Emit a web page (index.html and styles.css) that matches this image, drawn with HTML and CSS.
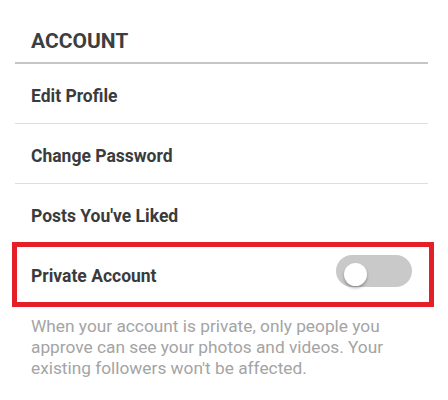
FILE: index.html
```html
<!DOCTYPE html>
<html>
<head>
<meta charset="utf-8">
<link rel="stylesheet" href="styles.css">
</head>
<body>
<div class="settings">
  <div class="section-header">ACCOUNT</div>
  <div class="row">Edit Profile</div>
  <div class="row">Change Password</div>
  <div class="row row-last">Posts You've Liked</div>
  <div class="row row-toggle highlighted">
    <span class="row-label">Private Account</span>
    <span class="toggle"><span class="knob"></span></span>
  </div>
  <p class="description">When your account is private, only people you approve can see your photos and videos. Your existing followers won't be affected.</p>
</div>
</body>
</html>
```
FILE: styles.css
```css
html, body {
  margin: 0;
  padding: 0;
  background: #ffffff;
}
body {
  width: 448px;
  height: 400px;
  overflow: hidden;
  font-family: Roboto, "Liberation Sans", sans-serif;
}
.settings {
  padding: 0 20px 0 15px;
}
.section-header {
  box-sizing: border-box;
  height: 64px;
  padding: 29px 0 0 16px;
  font-size: 21px;
  line-height: 24px;
  font-weight: 700;
  color: #3d3e40;
  border-bottom: 2px solid #c6c6c6;
}
.row {
  box-sizing: border-box;
  height: 60px;
  padding: 22px 0 0 16px;
  font-size: 17.5px;
  line-height: 20px;
  font-weight: 700;
  color: #3a3b3d;
  border-bottom: 1px solid #dedede;
}
.row-last {
  border-bottom: none;
}
.row-toggle {
  display: flex;
  justify-content: space-between;
  align-items: flex-start;
  border-bottom: none;
  padding-right: 16px;
}
.highlighted {
  position: relative;
}
.highlighted::after {
  content: "";
  position: absolute;
  top: -2px;
  bottom: -3px;
  left: -3px;
  right: -6px;
  border: 5px solid #e51f27;
}
.toggle {
  position: relative;
  width: 76px;
  height: 32px;
  margin-top: -11px;
  border-radius: 16px;
  background: #c9c9c9;
}
.knob {
  position: absolute;
  left: 8px;
  top: 8px;
  width: 23px;
  height: 23px;
  border-radius: 50%;
  background: #ffffff;
  box-shadow: 0 2px 3px rgba(0, 0, 0, 0.3);
}
.description {
  margin: 12px 0 0 0;
  padding-left: 16px;
  padding-right: 10px;
  font-size: 17.3px;
  line-height: 21px;
  color: #a4a4a4;
}
```
